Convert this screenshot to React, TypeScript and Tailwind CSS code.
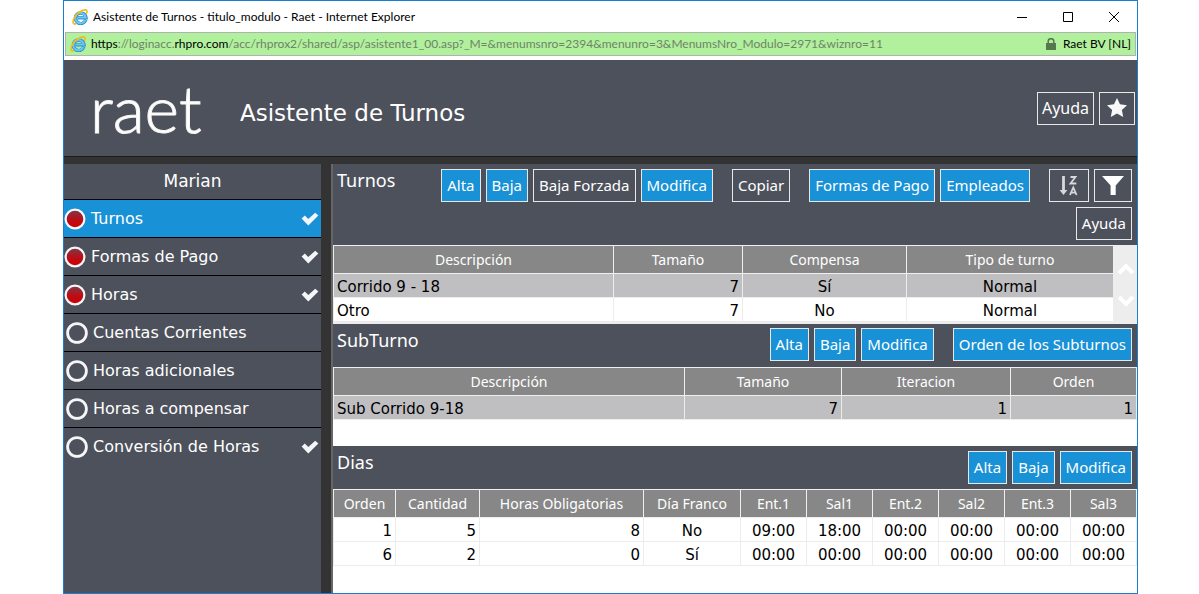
import type { ReactNode } from "react";

const NOTO = "font-['Noto_Sans','Open_Sans',sans-serif]";
const VERDANA = "font-['DejaVu_Sans',sans-serif]";
const CHROME = "font-['Lato','Noto_Sans',sans-serif]";

function ExplorerIcon() {
  return (
    <svg viewBox="0 0 16 16" className="h-4 w-4 shrink-0" aria-hidden="true">
      <path d="M13.800 10.800A5.300 5.300 0 1 1 14 8.700H5.500" fill="none" stroke="#2a8fce" strokeWidth="3.400" />
      <path d="M13.400 10.900A5.200 5.200 0 1 1 13.700 8.600H5.500" fill="none" stroke="#6cc8f0" strokeWidth="2" />
      <path
        d="M3.600 14.900C.6 15.600.2 12.200 2.600 8.200 5.400 3.800 10.600.5 13.600.9c1.700.3 1.700 1.800 1 3.300"
        fill="none"
        stroke="#f3bb1c"
        strokeWidth="1.600"
        strokeLinecap="round"
      />
    </svg>
  );
}

function CheckIcon() {
  return (
    <svg viewBox="0 0 18 14" className="h-[14px] w-[18px] shrink-0" aria-hidden="true">
      <path d="M.6 6.600 3.800 3.600l3.500 3.400L14.200.7l3.200 2.700L7.300 13.400z" fill="#f4f6fa" />
    </svg>
  );
}

function StepDot({ done }: { done: boolean }) {
  return (
    <svg viewBox="0 0 22 22" className="h-[22px] w-[22px] shrink-0" aria-hidden="true">
      <defs>
        <linearGradient id="dot" x1="0" y1="0" x2="0" y2="1">
          <stop offset="0" stopColor="#7d3a4c" />
          <stop offset="0.600" stopColor="#c00a10" />
          <stop offset="1" stopColor="#d00000" />
        </linearGradient>
      </defs>
      <circle cx="11" cy="11" r="9.400" fill={done ? "url(#dot)" : "none"} stroke="#f6f6f8" strokeWidth={done ? 2.200 : 2.800} />
    </svg>
  );
}

type BtnProps = { children: ReactNode; blue?: boolean; label?: string; size?: string };

function Btn({ children, blue, label, size = "px-[5px] text-[15px]" }: BtnProps) {
  return (
    <button
      type="button"
      aria-label={label}
      className={
        "flex h-[33px] items-center justify-center whitespace-nowrap border border-[#e8e8e8] text-white " +
        size + " " +
        (blue ? "bg-[#1891d6]" : "bg-[#4d515c]")
      }
    >
      {children}
    </button>
  );
}

type Align = "left" | "center" | "right";
type Column = { name: string; width: string; align: Align };

const alignClass: Record<Align, string> = {
  left: "text-left",
  center: "text-center",
  right: "text-right",
};

function Grid({ label, columns, rows, selected }: { label: string; columns: Column[]; rows: string[][]; selected?: number }) {
  return (
    <table aria-label={label} className="w-full table-fixed border-collapse">
      <thead>
        <tr className="h-7 bg-[#878787]">
          {columns.map((c) => (
            <th
              key={c.name}
              className={"border border-[#efefef] p-0 text-center text-[14px] font-normal text-white " + NOTO + " " + c.width}
            >
              {c.name}
            </th>
          ))}
        </tr>
      </thead>
      <tbody>
        {rows.map((row, r) => (
          <tr key={r} className={r === selected ? "h-6 bg-[#bfbec0]" : "h-6 bg-white"}>
            {row.map((cell, i) => (
              <td
                key={i}
                className={
                  "border border-[#ececec] px-[3px] pb-0 pt-[2px] text-[15px] leading-5 text-black " +
                  VERDANA + " " + alignClass[columns[i].align]
                }
              >
                {cell}
              </td>
            ))}
          </tr>
        ))}
      </tbody>
    </table>
  );
}

function Heading({ children }: { children: ReactNode }) {
  return <h2 className="pl-1 pt-1 text-[18px] leading-6 text-white">{children}</h2>;
}

const steps = [
  { name: "Turnos", done: true, check: true, active: true },
  { name: "Formas de Pago", done: true, check: true, active: false },
  { name: "Horas", done: true, check: true, active: false },
  { name: "Cuentas Corrientes", done: false, check: false, active: false },
  { name: "Horas adicionales", done: false, check: false, active: false },
  { name: "Horas a compensar", done: false, check: false, active: false },
  { name: "Conversión de Horas", done: false, check: true, active: false },
];

const turnoColumns: Column[] = [
  { name: "Descripción", width: "", align: "left" },
  { name: "Tamaño", width: "w-[129px]", align: "right" },
  { name: "Compensa", width: "w-[164px]", align: "center" },
  { name: "Tipo de turno", width: "w-[207px]", align: "center" },
];

const subturnoColumns: Column[] = [
  { name: "Descripción", width: "", align: "left" },
  { name: "Tamaño", width: "w-[157px]", align: "right" },
  { name: "Iteracion", width: "w-[169px]", align: "right" },
  { name: "Orden", width: "w-[126px]", align: "right" },
];

const diaColumns: Column[] = [
  { name: "Orden", width: "w-[62px]", align: "right" },
  { name: "Cantidad", width: "w-[84px]", align: "right" },
  { name: "Horas Obligatorias", width: "", align: "right" },
  { name: "Día Franco", width: "w-[97px]", align: "center" },
  { name: "Ent.1", width: "w-[66px]", align: "center" },
  { name: "Sal1", width: "w-[66px]", align: "center" },
  { name: "Ent.2", width: "w-[66px]", align: "center" },
  { name: "Sal2", width: "w-[66px]", align: "center" },
  { name: "Ent.3", width: "w-[66px]", align: "center" },
  { name: "Sal3", width: "w-[66px]", align: "center" },
];

export default function App() {
  return (
    <div className={"min-h-screen bg-white pl-[63px] pr-[61px] " + NOTO}>
      <div className="flex min-h-screen flex-col border border-[#1a7fd0] bg-white">
        <div className={"flex h-[31px] items-center pl-2 " + CHROME}>
          <ExplorerIcon />
          <span className="ml-[5px] flex-1 whitespace-nowrap text-[12px] text-black">
            Asistente de Turnos - titulo_modulo - Raet - Internet Explorer
          </span>
          <button type="button" aria-label="Minimizar" className="flex h-7 w-[46px] items-center justify-center">
            <svg viewBox="0 0 10 10" className="h-[10px] w-[10px]"><path d="M0 5.500h10" stroke="#000" /></svg>
          </button>
          <button type="button" aria-label="Maximizar" className="flex h-7 w-[46px] items-center justify-center">
            <svg viewBox="0 0 10 10" className="h-[10px] w-[10px]"><path d="M.5.500h9v9h-9z" fill="none" stroke="#000" /></svg>
          </button>
          <button type="button" aria-label="Cerrar" className="flex h-7 w-[46px] items-center justify-center">
            <svg viewBox="0 0 10 10" className="h-[10px] w-[10px]"><path d="M0 0l10 10M10 0 0 10" stroke="#000" /></svg>
          </button>
        </div>

        <div className={"mx-px flex h-6 items-center border border-[#b1b1b1] bg-[#b1f09d] pl-1 pr-1 text-[12px] " + CHROME}>
          <ExplorerIcon />
          <span className="ml-[5px] flex-1 whitespace-nowrap text-[#6e8468]">
            <span className="text-black">https</span>://loginacc.<span className="text-black">rhpro.com</span>
            /acc/rhprox2/shared/asp/asistente1_00.asp?_M=&amp;menumsnro=2394&amp;menunro=3&amp;MenumsNro_Modulo=2971&amp;wiznro=11
          </span>
          <svg viewBox="0 0 10 12" className="mr-[7px] h-3 w-[10px]" aria-hidden="true">
            <path d="M2.200 6V3.500a2.800 2.800 0 0 1 5.600 0V6" fill="none" stroke="#55784c" strokeWidth="1.500" />
            <path d="M0 5h10v7H0z" fill="#55784c" />
          </svg>
          <span className="whitespace-nowrap text-black">Raet BV [NL]</span>
        </div>

        <header className="mt-1 flex h-24 items-center bg-[#4d515c] pr-[2px] text-white">
          <div className="w-44 pl-[26px] font-['Lato',sans-serif] text-[66px] font-light leading-[88px] [-webkit-text-stroke:1px_#f4f4f4]">
            raet
          </div>
          <h1 className={"flex-1 pt-[10px] text-[23px] " + VERDANA}>Asistente de Turnos</h1>
          <div className="flex gap-[5px]">
            <Btn size="px-1 text-[16px]">Ayuda</Btn>
            <Btn label="Favoritos" size="w-9">
              <svg viewBox="0 0 20 20" className="h-5 w-5">
                <path d="M10 0l3 6.300 7 .9-5.100 4.800L16.200 19 10 15.600 3.800 19l1.300-7L0 7.200l7-.9z" fill="#f8f8f8" />
              </svg>
            </Btn>
          </div>
        </header>
        <div className="h-2 border-t border-[#1c1c1c] bg-[#333]" />

        <div className="flex flex-1">
          <nav className={"w-[257px] shrink-0 bg-[#4d515c] text-white " + VERDANA}>
            <div className="flex h-9 items-center justify-center border-b border-black pt-px text-[17px]">Marian</div>
            <ul>
              {steps.map((s, i) => (
                <li key={s.name} className={i < steps.length - 1 ? "border-b border-black" : ""}>
                  <a href="#" className={"flex h-[37px] items-center gap-[5px] pr-[2px] text-[16px] " + (s.active ? "bg-[#1891d6]" : "")}>
                    <span className={s.done ? "" : "pl-[2px]"}>
                      <StepDot done={s.done} />
                    </span>
                    <span className="flex-1">{s.name}</span>
                    {s.check && <CheckIcon />}
                  </a>
                </li>
              ))}
            </ul>
          </nav>
          <div className="w-3 shrink-0 border-r-2 border-[#666] bg-[#333]" />

          <main className="flex min-w-0 flex-1 flex-col">
            <section>
              <div className="flex h-[81px] justify-between bg-[#4d515c] pr-[5px]">
                <Heading>Turnos</Heading>
                <div className="flex flex-col items-end gap-[5px] pt-[5px]">
                  <div className="flex gap-[19px]">
                    <div className="flex gap-[5px]">
                      <Btn blue>Alta</Btn>
                      <Btn blue>Baja</Btn>
                      <Btn>Baja Forzada</Btn>
                      <Btn blue>Modifica</Btn>
                    </div>
                    <Btn>Copiar</Btn>
                    <div className="flex gap-[5px]">
                      <Btn blue>Formas de Pago</Btn>
                      <Btn blue>Empleados</Btn>
                    </div>
                    <div className="flex gap-[5px]">
                      <Btn label="Ordenar" size="w-10">
                        <svg viewBox="0 0 20 20" className="h-5 w-5" fill="none" stroke="#d6d8dc">
                          <path d="M4.500 0v15" strokeWidth="2.800" />
                          <path d="M.6 14h7.800L4.500 19z" fill="#d6d8dc" stroke="none" />
                          <path d="M11.500 1h5l-5 6.500h5.800" strokeWidth="1.800" />
                          <path d="M11 19l3.300-7.600 3.300 7.600M12 16.600h4.600" strokeWidth="1.800" />
                        </svg>
                      </Btn>
                      <Btn label="Filtrar" size="w-[38px]">
                        <svg viewBox="0 0 22 20" className="h-5 w-[22px]">
                          <path d="M0 0h22l-8.300 9.500V19H8.600V9.500z" fill="#fff" />
                        </svg>
                      </Btn>
                    </div>
                  </div>
                  <Btn>Ayuda</Btn>
                </div>
              </div>
              <div className="flex h-[79px] bg-[#ededed]">
                <div className="min-w-0 flex-1">
                  <Grid
                    label="Turnos"
                    columns={turnoColumns}
                    rows={[["Corrido 9 - 18", "7", "Sí", "Normal"], ["Otro", "7", "No", "Normal"]]}
                    selected={0}
                  />
                </div>
                <div className="flex w-[23px] flex-col items-center justify-center gap-5">
                  <svg viewBox="0 0 16 12" className="h-3 w-4"><path d="M1 10l7-7 7 7" fill="none" stroke="#fff" strokeWidth="4" /></svg>
                  <svg viewBox="0 0 16 12" className="h-3 w-4"><path d="M1 2l7 7 7-7" fill="none" stroke="#fff" strokeWidth="4" /></svg>
                </div>
              </div>
            </section>

            <section className="h-[122px]">
              <div className="flex h-[43px] justify-between bg-[#4d515c] pr-[5px]">
                <Heading>SubTurno</Heading>
                <div className="flex gap-[19px] pt-1">
                  <div className="flex gap-[5px]">
                    <Btn blue>Alta</Btn>
                    <Btn blue>Baja</Btn>
                    <Btn blue>Modifica</Btn>
                  </div>
                  <Btn blue>Orden de los Subturnos</Btn>
                </div>
              </div>
              <Grid label="SubTurno" columns={subturnoColumns} rows={[["Sub Corrido 9-18", "7", "1", "1"]]} selected={0} />
            </section>

            <section className="flex-1">
              <div className="flex h-[43px] justify-between bg-[#4d515c] pr-[5px]">
                <Heading>Dias</Heading>
                <div className="flex gap-[5px] pt-[5px]">
                  <Btn blue>Alta</Btn>
                  <Btn blue>Baja</Btn>
                  <Btn blue>Modifica</Btn>
                </div>
              </div>
              <Grid
                label="Dias"
                columns={diaColumns}
                rows={[
                  ["1", "5", "8", "No", "09:00", "18:00", "00:00", "00:00", "00:00", "00:00"],
                  ["6", "2", "0", "Sí", "00:00", "00:00", "00:00", "00:00", "00:00", "00:00"],
                ]}
              />
            </section>
          </main>
        </div>
      </div>
    </div>
  );
}
